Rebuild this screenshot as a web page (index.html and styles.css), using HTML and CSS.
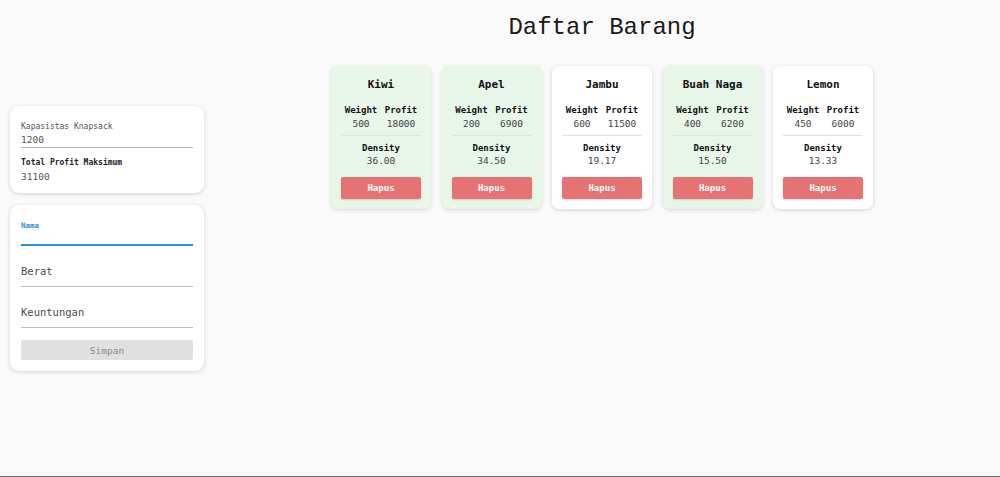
FILE: index.html
```html
<!DOCTYPE html>
<html lang="id">
<head>
<meta charset="utf-8">
<title>Daftar Barang</title>
<link rel="stylesheet" href="styles.css">
</head>
<body>
<div class="page">
  <aside class="sidebar">
    <div class="panel summary">
      <div class="field-label">Kapasistas Knapsack</div>
      <div class="field-value underlined">1200</div>
      <div class="field-label strong">Total Profit Maksimum</div>
      <div class="field-value total">31100</div>
    </div>
    <form class="panel form">
      <div class="input focused">
        <div class="input-float">Nama</div>
        <div class="input-line"></div>
      </div>
      <div class="input">
        <div class="input-text">Berat</div>
      </div>
      <div class="input">
        <div class="input-text">Keuntungan</div>
      </div>
      <button type="button" class="btn-save">Simpan</button>
    </form>
  </aside>
  <main class="main">
    <h1 class="title">Daftar Barang</h1>
    <div class="items">
      <div class="item selected">
        <div class="item-name">Kiwi</div>
        <div class="stats"><div class="stat"><div class="stat-label">Weight</div><div class="stat-value">500</div></div><div class="stat"><div class="stat-label">Profit</div><div class="stat-value">18000</div></div></div>
        <div class="density"><div class="stat-label">Density</div><div class="stat-value">36.00</div></div>
        <button type="button" class="btn-delete">Hapus</button>
      </div>
      <div class="item selected">
        <div class="item-name">Apel</div>
        <div class="stats"><div class="stat"><div class="stat-label">Weight</div><div class="stat-value">200</div></div><div class="stat"><div class="stat-label">Profit</div><div class="stat-value">6900</div></div></div>
        <div class="density"><div class="stat-label">Density</div><div class="stat-value">34.50</div></div>
        <button type="button" class="btn-delete">Hapus</button>
      </div>
      <div class="item">
        <div class="item-name">Jambu</div>
        <div class="stats"><div class="stat"><div class="stat-label">Weight</div><div class="stat-value">600</div></div><div class="stat"><div class="stat-label">Profit</div><div class="stat-value">11500</div></div></div>
        <div class="density"><div class="stat-label">Density</div><div class="stat-value">19.17</div></div>
        <button type="button" class="btn-delete">Hapus</button>
      </div>
      <div class="item selected">
        <div class="item-name">Buah Naga</div>
        <div class="stats"><div class="stat"><div class="stat-label">Weight</div><div class="stat-value">400</div></div><div class="stat"><div class="stat-label">Profit</div><div class="stat-value">6200</div></div></div>
        <div class="density"><div class="stat-label">Density</div><div class="stat-value">15.50</div></div>
        <button type="button" class="btn-delete">Hapus</button>
      </div>
      <div class="item">
        <div class="item-name">Lemon</div>
        <div class="stats"><div class="stat"><div class="stat-label">Weight</div><div class="stat-value">450</div></div><div class="stat"><div class="stat-label">Profit</div><div class="stat-value">6000</div></div></div>
        <div class="density"><div class="stat-label">Density</div><div class="stat-value">13.33</div></div>
        <button type="button" class="btn-delete">Hapus</button>
      </div>
    </div>
  </main>
</div>
</body>
</html>
```
FILE: styles.css
```css
* { box-sizing: border-box; }
html, body { margin: 0; padding: 0; }
body {
  background: #fafafa;
  font-family: "DejaVu Sans Mono", "Liberation Mono", monospace;
  color: #1f1f1f;
}
.page {
  display: flex;
  min-height: 100vh;
  border-bottom: 1px solid #707070;
}
.sidebar {
  width: 204px;
  flex: none;
  padding: 106px 0 0 10px;
  display: flex;
  flex-direction: column;
  gap: 12px;
}
.panel {
  background: #fff;
  border-radius: 9px;
  box-shadow: 0 1px 4px rgba(0,0,0,0.16);
  padding: 16px 11px 10px 11px;
  margin: 0;
}
.field-label {
  font-size: 8px;
  line-height: 10px;
  color: #555;
}
.field-label.strong {
  font-weight: bold;
  color: #222;
  margin-top: 10px;
}
.field-value {
  font-size: 9.5px;
  line-height: 12px;
  color: #555;
  margin-top: 2px;
}
.field-value.total { margin-top: 3px; }
.field-value.underlined {
  padding-bottom: 1px;
  border-bottom: 1px solid #b5b5b5;
}
.form { padding-bottom: 11px; }
.input {
  border-bottom: 1px solid #bdbdbd;
  padding-bottom: 8px;
}
.input.focused {
  border-bottom: 2px solid #2a8fd6;
  padding-bottom: 0;
}
.input-float {
  font-size: 7.5px;
  line-height: 10px;
  font-weight: bold;
  color: #2a8fd6;
}
.input-line { height: 13px; }
.input-text {
  margin-top: 18px;
  font-size: 10.5px;
  line-height: 14px;
  color: #4a4a4a;
}
.btn-save {
  display: block;
  width: 100%;
  margin-top: 12px;
  height: 20px;
  border: none;
  border-radius: 2px;
  background: #e0e0e0;
  color: #8a8a8a;
  font-family: inherit;
  font-size: 9.5px;
  padding: 0;
}
.main {
  flex: 1;
  display: flex;
  flex-direction: column;
  align-items: center;
}
.title {
  margin: 13px 0 23px 0;
  font-family: "Liberation Mono", monospace;
  font-size: 24px;
  line-height: 30px;
  font-weight: normal;
  color: #1a1a1a;
}
.items {
  display: flex;
  gap: 10.5px;
}
.item {
  width: 100px;
  background: #fff;
  border-radius: 7px;
  box-shadow: 0 1px 4px rgba(0,0,0,0.15);
  padding: 12px 10px 10px 10px;
  text-align: center;
}
.item.selected { background: #e8f5e9; }
.item-name {
  font-size: 11px;
  line-height: 14px;
  font-weight: bold;
  color: #111;
}
.stats {
  display: flex;
  margin-top: 12px;
  padding-bottom: 5px;
  border-bottom: 1px solid #e2e2e2;
}
.stat { flex: 1; }
.stat-label {
  font-size: 9px;
  line-height: 12px;
  font-weight: bold;
  color: #111;
}
.stat-value {
  font-size: 9.5px;
  line-height: 12px;
  color: #444;
  margin-top: 2px;
}
.density { margin-top: 6px; }
.density .stat-value { margin-top: 1px; }
.btn-delete {
  display: block;
  width: 100%;
  height: 22px;
  margin-top: 10px;
  border: none;
  border-radius: 2px;
  background: #e57373;
  color: #fff;
  font-family: inherit;
  font-weight: bold;
  font-size: 9px;
  padding: 0;
  box-shadow: 0 1px 2px rgba(0,0,0,0.15);
}
```
